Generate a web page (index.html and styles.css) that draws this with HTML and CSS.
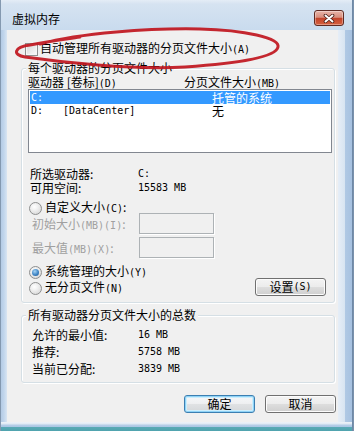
FILE: index.html
```html
<!DOCTYPE html>
<html lang="zh-CN">
<head>
<meta charset="utf-8">
<title>虚拟内存</title>
<link rel="stylesheet" href="styles.css">
</head>
<body>
<div class="window">
  <div class="titlebar">
    <span class="title">虚拟内存</span>
    <div class="close">
      <svg width="12" height="9" viewBox="0 0 12 9"><path d="M2.5 1.5L9.5 7.5M9.5 1.5L2.5 7.5" stroke="#4a1d15" stroke-width="3.6" stroke-linecap="round"/><path d="M2.5 1.5L9.5 7.5M9.5 1.5L2.5 7.5" stroke="#fff" stroke-width="2" stroke-linecap="round"/></svg>
    </div>
  </div>
  <div class="frame">
    <div class="side-left"></div>
    <div class="content">
      <div class="auto"><span class="checkbox"></span><span>自动管理所有驱动器的分页文件大小<span class="l">(A)</span></span></div>

      <div class="group g1">
        <div class="legend">每个驱动器的分页文件大小</div>
        <div class="headers"><span>驱动器 [卷标]<span class="l">(D)</span></span><span>分页文件大小<span class="l">(MB)</span></span></div>
        <div class="listbox">
          <div class="row sel"><span class="l">C:</span><span></span><span>托管的系统</span></div>
          <div class="row"><span class="l">D:</span><span class="l">[DataCenter]</span><span>无</span></div>
        </div>
        <div class="info">
          <span>所选驱动器:</span><span class="l">C:</span>
          <span>可用空间:</span><span class="l">15583 MB</span>
        </div>
        <div class="radio-line first"><span class="radio"></span><span>自定义大小<span class="l">(C)</span>:</span></div>
        <div class="field f1"><span class="dis">初始大小<span class="l">(MB)(I)</span>:</span><span class="textbox"></span></div>
        <div class="field f2"><span class="dis">最大值<span class="l">(MB)(X)</span>:</span><span class="textbox"></span></div>
        <div class="bottom">
          <div class="radios">
            <div class="radio-line"><span class="radio checked"></span><span>系统管理的大小<span class="l">(Y)</span></span></div>
            <div class="radio-line"><span class="radio"></span><span>无分页文件<span class="l">(N)</span></span></div>
          </div>
          <div class="btn btn-set">设置<span class="l">(S)</span></div>
        </div>
      </div>

      <div class="group g2">
        <div class="legend">所有驱动器分页文件大小的总数</div>
        <div class="totals">
          <span>允许的最小值:</span><span class="l">16 MB</span>
          <span>推荐:</span><span class="l">5758 MB</span>
          <span>当前已分配:</span><span class="l">3839 MB</span>
        </div>
      </div>

      <div class="buttons">
        <div class="btn default">确定</div>
        <div class="btn">取消</div>
      </div>
    </div>
    <div class="side-right"></div>
  </div>
  <div class="frame-bottom"></div>
</div>
<svg class="mark" width="354" height="431" viewBox="0 0 354 431">
  <path d="M40 44 C80 33, 150 28, 200 29 C245 30, 280 38, 278 47 C276 57, 240 63, 185 67 C130 70, 60 62, 25 57 C12 55, 14 47, 30 45 C45 42, 60 40, 80 37" fill="none" stroke="#c0161e" stroke-width="3" stroke-linecap="round" opacity="0.92"/>
</svg>
</body>
</html>
```

FILE: styles.css
```css
* { box-sizing: border-box; }
html, body { margin: 0; padding: 0; }
body {
  position: relative;
  width: 354px;
  height: 431px;
  overflow: hidden;
  background: #7a92ad;
  font: 12px "Noto Sans CJK SC", sans-serif;
  color: #000;
}
.l {
  font-family: "DejaVu Sans Mono", monospace;
  font-size: 10px;
}
.window {
  width: 353px;
  height: 431px;
  display: flex;
  flex-direction: column;
  background: linear-gradient(to bottom, #e4edf6 0, #d6e3f1 4px, #c9dbee 30px, #bcd2ea 100%);
  border-left: 1px solid #8499b0;
  border-right: 1px solid #6f89a6;
}
.titlebar {
  height: 30px;
  display: flex;
  align-items: flex-start;
  padding-left: 11px;
}
.title {
  margin-top: 12px;
  line-height: 14px;
  height: 14px;
}
.close {
  width: 30px;
  height: 16px;
  margin: 10px 8px 0 auto;
  border: 1px solid #5f2a22;
  border-radius: 3px;
  background: linear-gradient(#e9b5a9 0%, #d88e7d 45%, #c3442b 52%, #d5603f 100%);
  box-shadow: inset 0 0 0 1px rgba(255, 255, 255, 0.35);
  display: flex;
  align-items: center;
  justify-content: center;
}
.frame {
  flex: 1;
  display: flex;
}
.side-left {
  width: 6px;
  background: linear-gradient(90deg, #b4cbe5 0, #c2d6ec 3px, #d9e5f2 6px);
}
.side-right {
  flex: 1;
  background: linear-gradient(90deg, #e6eef7 0, #d7e4f1 7px, #b0c9e4 7px, #a6c1e0 100%);
}
.frame-bottom {
  height: 9px;
  background: linear-gradient(to bottom, #eef3f9 0, #dfe9f4 2px, #b6cee8 3px, #a9c5e3 5px, #5aaab6 5px, #4fa3ae 100%);
}
.content {
  width: 331px;
  background: #f0f0f0;
  padding: 11px 0 0 14px;
  display: flex;
  flex-direction: column;
}
.auto {
  display: flex;
  align-items: center;
  height: 16px;
  line-height: 16px;
  margin-left: 4px;
}
.checkbox {
  width: 13px;
  height: 13px;
  margin-right: 2px;
  border: 1px solid #8e8f8f;
  background: linear-gradient(135deg, #d6d6d6, #fbfbfb);
  box-shadow: inset 0 0 0 1px #f6f6f6;
}
.group {
  width: 314px;
  border: 1px solid #d5dfe5;
  border-radius: 3px;
  box-shadow: inset 1px 1px 0 #fff, 1px 1px 0 #fff;
  display: flex;
  flex-direction: column;
  padding: 0 1px 6px 6px;
}
.g1 { margin-top: 11px; }
.g2 { margin-top: 12px; padding-bottom: 5px; }
.legend {
  align-self: flex-start;
  margin: -8px 0 0 -2px;
  padding: 0 2px;
  height: 14px;
  line-height: 14px;
  background: #f0f0f0;
}
.headers {
  display: grid;
  grid-template-columns: 156px 1fr;
  height: 13px;
  line-height: 13px;
}
.listbox {
  margin-top: 1px;
  width: 304px;
  height: 64px;
  border: 1px solid #828790;
  background: #fff;
  padding: 1px;
}
.row {
  display: grid;
  grid-template-columns: 32px 149px 1fr;
  height: 13px;
  line-height: 13px;
  padding-left: 1px;
}
.row.sel {
  background: #3399ff;
  color: #fff;
}
.info {
  margin-top: 14px;
  padding-left: 2px;
  display: grid;
  grid-template-columns: 108px 1fr;
  grid-auto-rows: 14px;
  line-height: 14px;
}
.radio-line {
  display: flex;
  align-items: center;
  height: 16px;
  line-height: 16px;
  padding-left: 1px;
}
.radio-line.first {
  height: 14px;
  margin-top: 6px;
}
.radio {
  width: 13px;
  height: 13px;
  margin-right: 3px;
  border-radius: 50%;
  border: 1px solid #8e8f8f;
  background: radial-gradient(circle at 40% 35%, #ffffff 0, #eeeeee 40%, #cfcfcf 100%);
  display: flex;
  align-items: center;
  justify-content: center;
}
.radio.checked::after {
  content: "";
  width: 7px;
  height: 7px;
  border-radius: 50%;
  background: radial-gradient(circle at 40% 35%, #a6d4f5 0, #3f85c5 55%, #1d4f86 100%);
}
.field {
  display: grid;
  grid-template-columns: 107px 75px;
  align-items: center;
  height: 21px;
  padding-left: 4px;
}
.field.f1 { margin-top: -2px; }
.field.f2 { margin-top: 3px; }
.dis { color: #a0a0a0; }
.textbox {
  height: 21px;
  border: 1px solid #adb2b5;
  background: #f0f0f0;
  box-shadow: 1px 1px 0 #fff;
}
.bottom {
  display: flex;
  justify-content: space-between;
  align-items: flex-end;
  margin-top: 6px;
}
.btn {
  width: 71px;
  height: 18px;
  border: 1px solid #707070;
  border-radius: 3px;
  background: linear-gradient(#f4f4f4 0%, #ececec 48%, #dddddd 52%, #cfcfcf 100%);
  box-shadow: inset 0 0 0 1px #fcfcfc;
  display: flex;
  align-items: center;
  justify-content: center;
  line-height: 14px;
}
.btn-set { margin-right: 7px; }
.btn.default {
  border-color: #3c7fb1;
  box-shadow: inset 0 0 0 1px #8fd3f7, inset 0 0 0 2px #cdeefc;
  background: linear-gradient(#f6f8fa 0%, #eeeff1 48%, #e0e2e4 52%, #d4d7da 100%);
}
.totals {
  margin-top: 4px;
  padding-left: 4px;
  display: grid;
  grid-template-columns: 106px 1fr;
  grid-auto-rows: 17px;
  line-height: 17px;
}
.buttons {
  display: flex;
  justify-content: flex-end;
  gap: 10px;
  margin-top: 12px;
  padding-right: 2px;
}
.mark {
  position: absolute;
  left: 0;
  top: 0;
  pointer-events: none;
}
```
